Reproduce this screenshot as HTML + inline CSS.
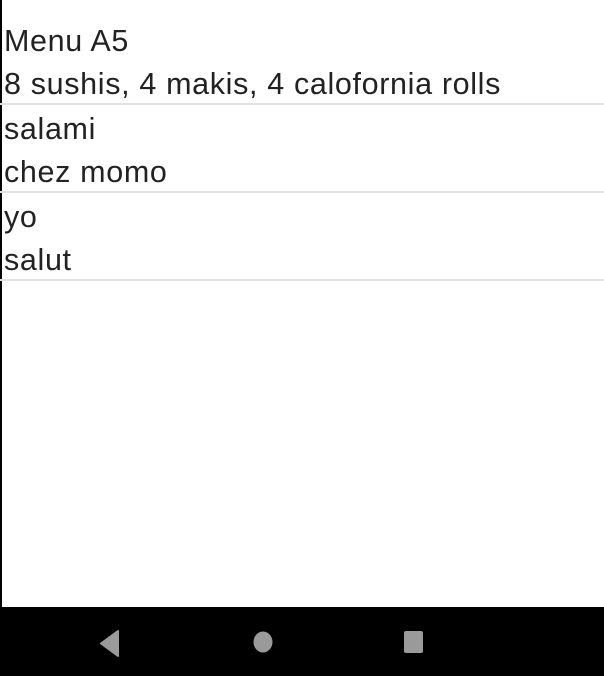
<!DOCTYPE html>
<html><head><style>
html,body{margin:0;padding:0;}
body{width:604px;height:676px;position:relative;background:#fff;overflow:hidden;font-family:"Liberation Sans",Arial,sans-serif;}
.lb{position:absolute;left:0;top:0;width:2px;height:607px;background:#000;}
.list{position:absolute;left:0;top:17px;width:604px;}
.row{height:86px;border-bottom:2px solid #e2e2e2;}
.row div{height:43px;line-height:43px;font-size:30.5px;letter-spacing:0.65px;color:#222;padding-left:4px;white-space:nowrap;position:relative;top:3px;}
.nav{position:absolute;left:0;top:607px;width:604px;height:69px;background:#000;}
</style></head><body>
<div class="lb"></div>
<div class="list">
<div class="row"><div>Menu A5</div><div>8 sushis, 4 makis, 4 calofornia rolls</div></div>
<div class="row"><div>salami</div><div>chez momo</div></div>
<div class="row"><div>yo</div><div>salut</div></div>
</div>
<div class="nav">
<svg width="604" height="69" style="position:absolute;left:0;top:0">
<polygon points="118,24 118,49 101,36.5" fill="#9a9a9a" stroke="#9a9a9a" stroke-linejoin="round" stroke-width="2"/>
<ellipse cx="263" cy="35" rx="9.5" ry="10.5" fill="#9a9a9a"/>
<rect x="404" y="24" width="19" height="22" rx="2" fill="#9a9a9a"/>
</svg>
</div>
</body></html>
